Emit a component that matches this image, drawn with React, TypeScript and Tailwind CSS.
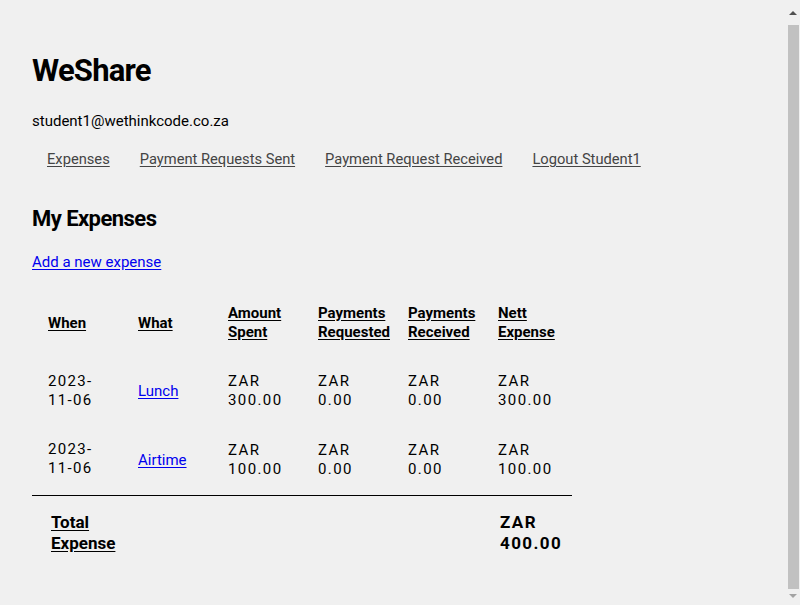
const rows = [
  { when: ["2023-", "11-06"], what: "Lunch", amount: "300.00", requested: "0.00", received: "0.00", nett: "300.00" },
  { when: ["2023-", "11-06"], what: "Airtime", amount: "100.00", requested: "0.00", received: "0.00", nett: "100.00" },
];

const navLinks = ["Expenses", "Payment Requests Sent", "Payment Request Received", "Logout Student1"];

function Head({ lines }: { lines: string[] }) {
  return (
    <th className="px-4 py-[15px] text-left align-middle font-bold">
      {lines.map((l, i) => (
        <span key={i} className="block underline underline-offset-2">
          {l}
        </span>
      ))}
    </th>
  );
}

function Money({ value }: { value: string }) {
  return (
    <td className="px-4 py-[15px] align-middle tracking-[1.4px]">
      ZAR
      <br />
      {value}
    </td>
  );
}

function Scrollbar() {
  return (
    <div className="flex w-[15px] shrink-0 flex-col items-center bg-[#f0f0f0] pb-[7px] pt-[11px]">
      <svg width="8" height="4" viewBox="0 0 8 4" className="shrink-0">
        <path d="M0 4 L4 0 L8 4 Z" fill="#505050" />
      </svg>
      <div className="ml-[2px] mt-[10px] w-[11px] flex-1 bg-[#c1c1c1]" />
      <svg width="8" height="4" viewBox="0 0 8 4" className="mt-[5px] shrink-0">
        <path d="M0 0 L8 0 L4 4 Z" fill="#a3a3a3" />
      </svg>
    </div>
  );
}

export default function App() {
  return (
    <div className="flex h-[605px] overflow-hidden bg-[#f0f0f0] text-black [font-family:Roboto,'Liberation_Sans',sans-serif]">
      <main className="flex-1 px-8 pt-[51px] text-[15px] leading-[19px]">
        <h1 className="text-[31px] font-bold leading-[40px] tracking-tight">WeShare</h1>
        <p className="mt-[21px]">student1@wethinkcode.co.za</p>
        <nav className="mt-[19px] flex text-[14.7px]">
          {navLinks.map((l) => (
            <a key={l} href="#" className="px-[15px] text-[#444] underline underline-offset-2">
              {l}
            </a>
          ))}
        </nav>
        <h2 className="mt-[35px] text-[22px] font-bold leading-[30px] tracking-tight">My Expenses</h2>
        <a href="#" className="mt-[19px] inline-block text-[#0000ee] underline underline-offset-2">
          Add a new expense
        </a>
        <table className="mt-[17px] w-[540px] table-fixed border-collapse">
          <thead>
            <tr>
              <Head lines={["When"]} />
              <Head lines={["What"]} />
              <Head lines={["Amount", "Spent"]} />
              <Head lines={["Payments", "Requested"]} />
              <Head lines={["Payments", "Received"]} />
              <Head lines={["Nett", "Expense"]} />
            </tr>
          </thead>
          <tbody>
            {rows.map((r, i) => (
              <tr key={r.what} className={i === rows.length - 1 ? "border-b border-black" : ""}>
                <td className={`px-4 ${i === rows.length - 1 ? "pb-[17px] pt-[15px]" : "py-[15px]"} align-middle tracking-[1.3px]`}>
                  {r.when[0]}
                  <br />
                  {r.when[1]}
                </td>
                <td className="px-4 py-[15px] align-middle">
                  <a href="#" className="text-[#0000ee] underline underline-offset-2">
                    {r.what}
                  </a>
                </td>
                <Money value={r.amount} />
                <Money value={r.requested} />
                <Money value={r.received} />
                <Money value={r.nett} />
              </tr>
            ))}
          </tbody>
          <tfoot>
            <tr className="text-[17px] font-bold leading-[21px]">
              <td className="px-[19px] py-[16px] align-top">
                <span className="block underline underline-offset-2">Total</span>
                <span className="block underline underline-offset-2">Expense</span>
              </td>
              <td colSpan={4}></td>
              <td className="px-[18px] py-[16px] align-top tracking-[1.4px]">
                ZAR
                <br />
                400.00
              </td>
            </tr>
          </tfoot>
        </table>
      </main>
      <Scrollbar />
    </div>
  );
}
